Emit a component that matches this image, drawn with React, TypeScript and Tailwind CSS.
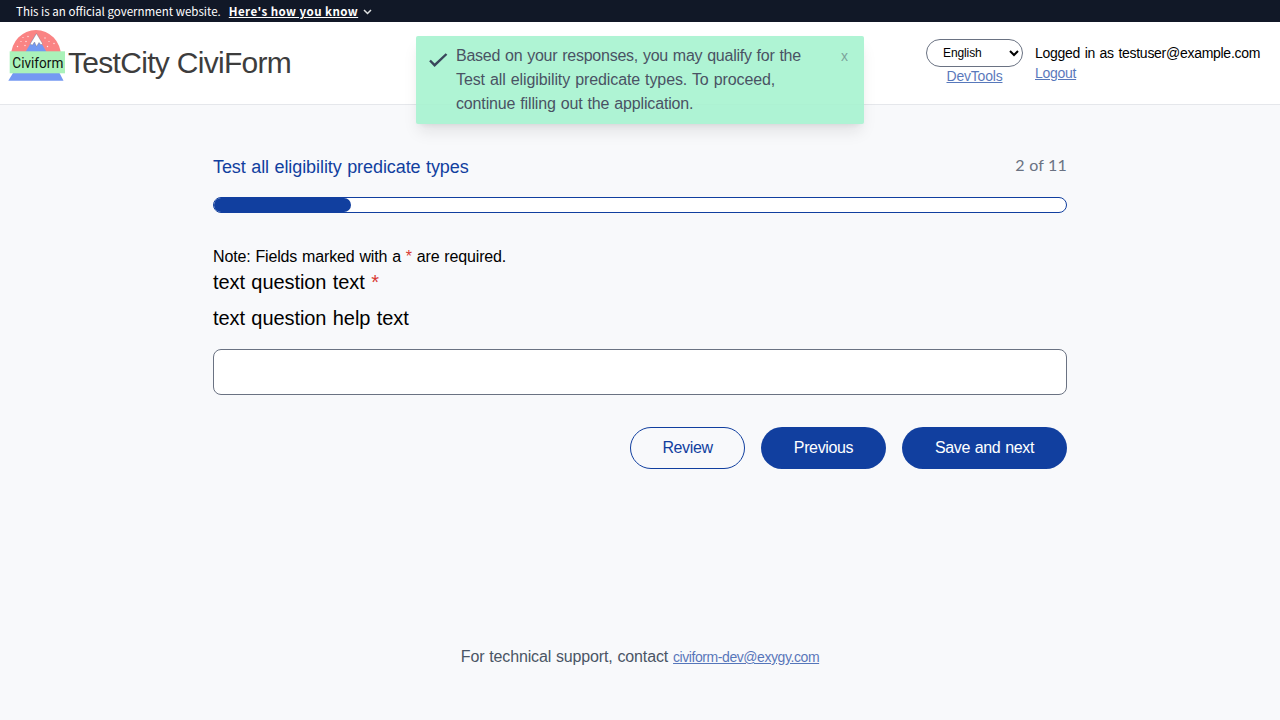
import type { ReactNode } from "react";

function Link({ children, className }: { children: ReactNode; className: string }) {
  return (
    <a href="#" className={`whitespace-nowrap text-[#113f9f] underline opacity-70 ${className}`}>
      {children}
    </a>
  );
}

function Required() {
  return <span className="text-[#d83933]">*</span>;
}

function Logo() {
  return (
    <svg width="58" height="52" viewBox="0 0 58 52" className="block shrink-0">
      <path d="M3 26a25 26 0 0 1 50 0z" fill="#fa8484" />
      <path d="M28 4 L17.5 22 H38.500z" fill="#7499f2" />
      <path d="M28.500 3.500 L22 14.200 L24.500 15 L26.500 12 L28.500 16.500 L31 12.500 L33 15 L34.500 13.500z" fill="#fff" stroke="#776d78" strokeWidth="0.4" />
      <g fill="#fff" fillOpacity="0.85">
        <circle cx="20" cy="6.500" r="0.7" /><circle cx="15" cy="7.500" r="0.6" />
        <circle cx="13" cy="11.500" r="0.6" /><circle cx="18" cy="11.500" r="0.7" />
        <circle cx="9.500" cy="16.500" r="0.7" /><circle cx="17" cy="15.500" r="0.7" />
        <circle cx="37" cy="8" r="0.7" /><circle cx="41" cy="11.500" r="0.6" />
        <circle cx="46" cy="13.500" r="0.7" /><circle cx="39.500" cy="16.500" r="0.7" />
      </g>
      <path d="M5 43h46.500L55.500 50.700H0.300z" fill="#7499f2" />
      <rect x="1.700" y="21.300" width="55.300" height="22" fill="#aaf2b9" />
      <text x="4.300" y="37.700" className="font-['Roboto',sans-serif] text-[13.8px]" textLength="51" lengthAdjust="spacingAndGlyphs" fill="#111">
        Civiform
      </text>
    </svg>
  );
}

export default function App() {
  return (
    <div className="relative flex h-[720px] flex-col bg-[#f8f9fb] font-['Liberation_Sans',sans-serif] text-black">
      <div className="flex h-[22px] items-center bg-[#111827] pl-4 font-['Noto_Sans_CJK_JP',sans-serif] text-[11.55px] leading-[22px] text-white">
        <span className="whitespace-nowrap">This is an official government website.</span>
        <a href="#" className="ml-2 whitespace-nowrap font-bold tracking-[0.43px] underline">
          Here's how you know
        </a>
        <svg width="9" height="6" viewBox="0 0 9 6" className="ml-[5px] mt-[2px]" fill="none" stroke="#dfe1e2" strokeWidth="1.500">
          <path d="M1 1l3.500 3.500L8 1" />
        </svg>
      </div>

      <header className="flex h-[83px] shrink-0 items-start border-b border-gray-200 bg-white pl-2 pr-5">
        <div className="flex pt-2">
          <Logo />
          <h1 className="ml-[2px] mt-[10px] whitespace-nowrap text-[30px] leading-[46px] tracking-[-0.7px] text-[#3d3d3d]">
            TestCity CiviForm
          </h1>
        </div>
        <div className="ml-auto flex pt-[17px]">
          <div className="flex w-[97px] flex-col items-center">
            <select defaultValue="en" className="h-7 w-[97px] rounded-full border border-gray-500 bg-white pl-3 text-xs tracking-[-0.1px]">
              <option value="en">English</option>
              <option value="es">Español</option>
            </select>
            <Link className="text-[14px] leading-[18px] tracking-[-0.2px]">DevTools</Link>
          </div>
          <div className="ml-3 flex w-[225px] flex-col items-start pt-[4px]">
            <span className="whitespace-nowrap text-[14px] leading-5 tracking-[-0.28px] [word-spacing:1px]">Logged in as testuser@example.com</span>
            <Link className="text-[14px] leading-5 tracking-[-0.28px]">Logout</Link>
          </div>
        </div>
      </header>

      <div className="absolute left-[416px] top-9 flex h-[88px] w-[448px] rounded-xs bg-[#a7f3d0] text-gray-700 opacity-90 shadow-lg">
        <svg width="19" height="14" viewBox="0 0 19 14" className="ml-[13px] mt-[17px] shrink-0" fill="none" stroke="#25324a" strokeWidth="2.400">
          <path d="M1 7.500L5.600 12.200L17.500 1" />
        </svg>
        <p className="ml-[8px] mt-2 whitespace-nowrap text-[16px] leading-6 tracking-[-0.25px] [word-spacing:0.7px]">
          Based on your responses, you may qualify for the
          <br />
          <span className="tracking-[-0.1px]">Test all eligibility predicate types. To proceed,</span>
          <br />
          <span className="tracking-[-0.15px]">continue filling out the application.</span>
        </p>
        <button className="ml-auto mr-4 mt-2 h-6 text-[14px] leading-6 opacity-50">x</button>
      </div>

      <main className="mx-auto flex w-[854px] flex-1 flex-col pt-[48px]">
        <div className="flex h-7 items-start justify-between">
          <h2 className="whitespace-nowrap text-[18px] leading-7 tracking-[-0.08px] text-[#113f9f] [word-spacing:0.6px]">
            Test all eligibility predicate types
          </h2>
          <span className="font-['Lato',sans-serif] text-[16px] leading-6 tracking-[0.2px] text-gray-500">2 of 11</span>
        </div>
        <div className="mt-4 h-4 overflow-hidden rounded-full border border-[#113f9f] bg-white">
          <div className="h-full w-[137px] rounded-r-full bg-[#113f9f]" />
        </div>
        <p className="mt-8 whitespace-nowrap text-[16px] leading-6 tracking-[-0.15px] [word-spacing:0.6px]">
          Note: Fields marked with a <Required /> are required.
        </p>
        <p className="-mt-px whitespace-nowrap text-[20px] leading-7 tracking-[-0.07px] [word-spacing:0.9px]">
          text question text <Required />
        </p>
        <p className="mt-2 whitespace-nowrap text-[20px] leading-7 tracking-[-0.07px] [word-spacing:0.9px]">text question help text</p>
        <input aria-label="text question text" className="mt-[17px] h-[46px] w-full rounded-lg border border-gray-500 bg-white px-3" />
        <div className="mt-8 flex justify-end gap-4 text-[16px] leading-6 tracking-[-0.37px]">
          <button className="h-[42px] w-[115px] rounded-full border border-[#113f9f] text-[#113f9f]">Review</button>
          <button className="h-[42px] w-[125px] rounded-full bg-[#113f9f] text-white">Previous</button>
          <button className="h-[42px] w-[165px] rounded-full bg-[#113f9f] text-white [word-spacing:0.8px]">Save and next</button>
        </div>
      </main>

      <footer className="flex h-[75px] items-baseline justify-center text-[16px] leading-6 text-gray-600">
        <span className="whitespace-nowrap tracking-[-0.15px] [word-spacing:0.6px]">For technical support, contact</span>
        <Link className="ml-[5px] text-[14px] tracking-[-0.43px]">civiform-dev@exygy.com</Link>
      </footer>
    </div>
  );
}
